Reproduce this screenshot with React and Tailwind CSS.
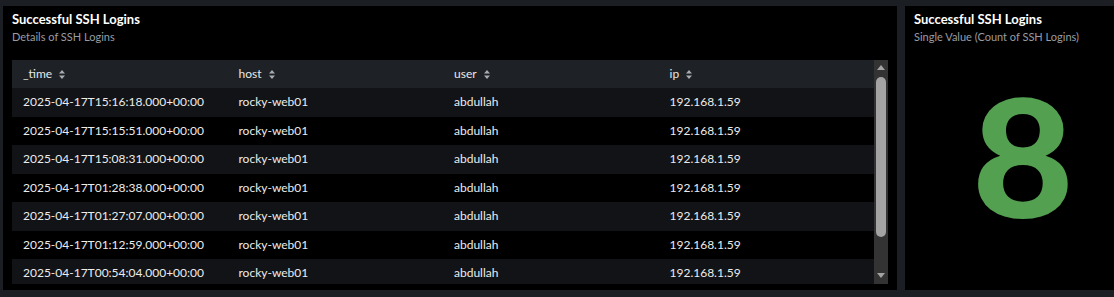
import React from "react";

const rows = [
  "2025-04-17T15:16:18.000+00:00",
  "2025-04-17T15:15:51.000+00:00",
  "2025-04-17T15:08:31.000+00:00",
  "2025-04-17T01:28:38.000+00:00",
  "2025-04-17T01:27:07.000+00:00",
  "2025-04-17T01:12:59.000+00:00",
  "2025-04-17T00:54:04.000+00:00",
];

function SortIcon() {
  return (
    <svg width="6" height="9" viewBox="0 0 6 9" className="ml-[7px]">
      <path d="M3 0 L6 3.5 L0 3.5 Z" fill="#a9adb3" />
      <path d="M0 5.5 L6 5.5 L3 9 Z" fill="#a9adb3" />
    </svg>
  );
}

export default function App() {
  const font = { fontFamily: "'Lato', 'Open Sans', sans-serif" };
  const cols = ["_time", "host", "user", "ip"];
  return (
    <div
      className="w-[1114px] h-[297px] bg-[#1b1e22] pt-[6px] pl-[3px] flex gap-[8px] overflow-hidden"
      style={font}
    >
      <div className="w-[894px] h-[284px] bg-black pl-[9px] pr-[9px] pt-[5px] flex flex-col">
        <div className="text-white font-bold text-[13px] leading-[16px]">Successful SSH Logins</div>
        <div className="text-[#9a9ca0] text-[11px] leading-[14px] mt-[3px]">Details of SSH Logins</div>
        <div className="mt-[16px] h-[224px] flex overflow-hidden">
          <div className="w-[862px] flex flex-col">
            <div className="h-[28px] shrink-0 bg-[#1e2125] grid grid-cols-4 items-center">
              {cols.map((c) => (
                <div key={c} className="pl-[11px] flex items-center text-[#e8e8e8] text-[12px]">
                  {c}
                  <SortIcon />
                </div>
              ))}
            </div>
            {rows.map((t, i) => (
              <div
                key={t}
                className={`h-[28.5px] shrink-0 grid grid-cols-4 items-center text-[12px] text-[#ececec] ${
                  i % 2 === 0 ? "bg-[#111316]" : "bg-black"
                }`}
              >
                <div className="pl-[11px]">{t}</div>
                <div className="pl-[11px]">rocky-web01</div>
                <div className="pl-[11px]">abdullah</div>
                <div className="pl-[11px]">192.168.1.59</div>
              </div>
            ))}
          </div>
          <div className="w-[14px] h-[224px] bg-[#333333] flex flex-col items-center relative">
            <svg width="10" height="8" viewBox="0 0 10 8" className="mt-[4px]">
              <path d="M1 6 L5 1 L9 6 Z" fill="#a3a3a3" />
            </svg>
            <div className="mt-[5px] w-[10px] h-[160px] rounded-[5px] bg-[#a3a3a3]" />
            <svg width="10" height="8" viewBox="0 0 10 8" className="mt-auto mb-[5px]">
              <path d="M1 2 L9 2 L5 7 Z" fill="#a3a3a3" />
            </svg>
          </div>
        </div>
      </div>
      <div className="flex-1 h-[284px] bg-black pl-[9px] pt-[5px] flex flex-col">
        <div className="text-white font-bold text-[13px] leading-[16px]">Successful SSH Logins</div>
        <div className="text-[#9a9ca0] text-[11px] leading-[14px] mt-[3px]">Single Value (Count of SSH Logins)</div>
        <div className="flex-1 flex items-start pl-[58px]">
          <span className="inline-block origin-left scale-x-[1.07] text-[#53a051] font-black text-[164px] leading-none mt-[29px]">8</span>
        </div>
      </div>
    </div>
  );
}
